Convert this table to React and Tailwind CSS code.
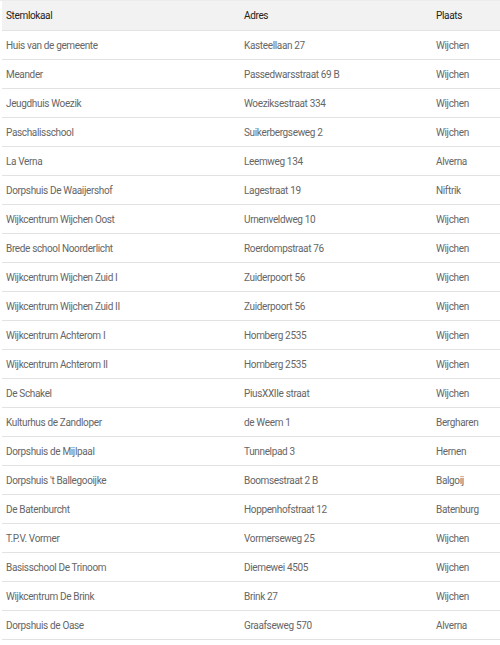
import React from "react";

const rows = [
  ["Huis van de gemeente", "Kasteellaan 27", "Wijchen"],
  ["Meander", "Passedwarsstraat 69 B", "Wijchen"],
  ["Jeugdhuis Woezik", "Woeziksestraat 334", "Wijchen"],
  ["Paschalisschool", "Suikerbergseweg 2", "Wijchen"],
  ["La Verna", "Leemweg 134", "Alverna"],
  ["Dorpshuis De Waaijershof", "Lagestraat 19", "Niftrik"],
  ["Wijkcentrum Wijchen Oost", "Urnenveldweg 10", "Wijchen"],
  ["Brede school Noorderlicht", "Roerdompstraat 76", "Wijchen"],
  ["Wijkcentrum Wijchen Zuid I", "Zuiderpoort 56", "Wijchen"],
  ["Wijkcentrum Wijchen Zuid II", "Zuiderpoort 56", "Wijchen"],
  ["Wijkcentrum Achterom I", "Homberg 2535", "Wijchen"],
  ["Wijkcentrum Achterom II", "Homberg 2535", "Wijchen"],
  ["De Schakel", "PiusXXIIe straat", "Wijchen"],
  ["Kulturhus de Zandloper", "de Weem 1", "Bergharen"],
  ["Dorpshuis de Mijlpaal", "Tunnelpad 3", "Hernen"],
  ["Dorpshuis 't Ballegooijke", "Boomsestraat 2 B", "Balgoij"],
  ["De Batenburcht", "Hoppenhofstraat 12", "Batenburg"],
  ["T.P.V. Vormer", "Vormerseweg 25", "Wijchen"],
  ["Basisschool De Trinoom", "Diemewei 4505", "Wijchen"],
  ["Wijkcentrum De Brink", "Brink 27", "Wijchen"],
  ["Dorpshuis de Oase", "Graafseweg 570", "Alverna"],
];

export default function App() {
  return (
    <div
      className="w-[500px] bg-white text-[10px] tracking-[-0.35px]"
      style={{ fontFamily: "Roboto, 'Liberation Sans', sans-serif" }}
    >
      <div className="border-t border-[#ececec] pl-[2px]">
        <div className="grid h-[30px] grid-cols-[238px_192px_1fr] items-center border-b border-[#e2e2e2] bg-[#f2f2f2] pl-[4px] text-[#222]">
          <div>Stemlokaal</div>
          <div>Adres</div>
          <div>Plaats</div>
        </div>
        {rows.map((r, i) => (
          <div
            key={i}
            className="grid h-[29px] grid-cols-[238px_192px_1fr] items-center border-b border-[#e2e2e2] pl-[4px] text-[#666]"
          >
            <div>{r[0]}</div>
            <div>{r[1]}</div>
            <div>{r[2]}</div>
          </div>
        ))}
      </div>
    </div>
  );
}
